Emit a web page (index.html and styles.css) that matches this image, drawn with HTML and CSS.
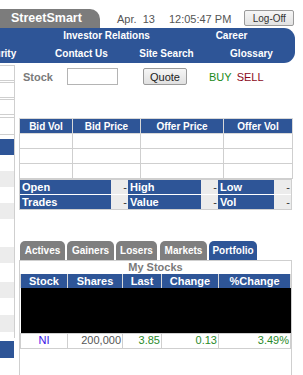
FILE: index.html
```html
<!DOCTYPE html>
<html>
<head>
<meta charset="utf-8">
<link rel="stylesheet" href="styles.css">
</head>
<body>
<div class="page">
  <header class="top">
    <div class="brand">StreetSmart</div>
    <span class="date">Apr.  13</span>
    <span class="time">12:05:47 PM</span>
    <button class="logoff">Log-Off</button>
  </header>
  <nav class="nav">
    <div class="nav-row nav-row1"><a>Investor Relations</a><a>Career</a></div>
    <div class="nav-row nav-row2"><a>Security</a><a>Contact Us</a><a>Site Search</a><a>Glossary</a></div>
  </nav>
  <div class="content">
    <aside class="side">
      <div class="side-inner">
        <div class="sbox b1"></div>
        <div class="sbox b2"></div>
        <div class="sbox b3"></div>
        <div class="sbox b4"></div>
        <div class="sblue"></div>
        <div class="srow h16"></div>
        <div class="srow alt h16"></div>
        <div class="srow h16"></div>
        <div class="srow alt h16"></div>
        <div class="srow h28"></div>
        <div class="srow alt h16"></div>
        <div class="srow h19"></div>
        <div class="srow alt h16"></div>
        <div class="srow h17"></div>
        <div class="srow alt h17"></div>
        <div class="srow h6"></div>
      </div>
      <div class="sblue last"></div>
    </aside>
    <main class="main">
      <div class="quote-row">
        <span class="stock-label">Stock</span>
        <input class="stock-input" type="text">
        <button class="quote-btn">Quote</button>
        <span class="buy">BUY</span>
        <span class="sell">SELL</span>
      </div>

      <table class="depth">
        <colgroup><col class="c1"><col class="c2"><col class="c3"><col class="c4"></colgroup>
        <tr class="head"><th>Bid Vol</th><th>Bid Price</th><th>Offer Price</th><th>Offer Vol</th></tr>
        <tr><td></td><td></td><td></td><td></td></tr>
        <tr><td></td><td></td><td></td><td></td></tr>
        <tr><td></td><td></td><td></td><td></td></tr>
      </table>

      <div class="stats">
        <div class="lab">Open</div><div class="val">-</div>
        <div class="lab">High</div><div class="val">-</div>
        <div class="lab">Low</div><div class="val">-</div>
        <div class="lab">Trades</div><div class="val">-</div>
        <div class="lab">Value</div><div class="val">-</div>
        <div class="lab">Vol</div><div class="val">-</div>
      </div>

      <div class="tabs">
        <div class="tab t1">Actives</div>
        <div class="tab t2">Gainers</div>
        <div class="tab t3">Losers</div>
        <div class="tab t4">Markets</div>
        <div class="tab t5 active">Portfolio</div>
      </div>
      <div class="portfolio">
        <div class="pf-title">My Stocks</div>
        <table class="pf">
          <colgroup><col class="p1"><col class="p2"><col class="p3"><col class="p4"><col class="p5"></colgroup>
          <tr class="head"><th>Stock</th><th>Shares</th><th>Last</th><th>Change</th><th>%Change</th></tr>
          <tr class="black"><td colspan="5"></td></tr>
          <tr class="data"><td class="sym">NI</td><td class="num gray">200,000</td><td class="num up">3.85</td><td class="num up">0.13</td><td class="num up">3.49%</td></tr>
        </table>
      </div>
    </main>
  </div>
</div>
</body>
</html>
```

FILE: styles.css
```css
* { box-sizing: border-box; }
html, body { margin: 0; padding: 0; background: #fff; }
body { width: 303px; height: 375px; overflow: hidden; font-family: "Liberation Sans", Arial, sans-serif; }

.page { width: 303px; }

.top { height: 28px; padding-top: 9px; display: flex; align-items: center; }
.brand { width: 100px; height: 19px; line-height: 19px; background: #7c7c7c; color: #fff; font-weight: bold; font-size: 12.5px; padding-left: 11px; border-top-right-radius: 10px; align-self: flex-start; }
.date { margin-left: 17px; white-space: pre; font-size: 11px; color: #555; }
.time { margin-left: 14px; font-size: 11px; color: #555; }
.logoff { margin-left: 13px; width: 50px; height: 16px; padding: 0; font-family: "Liberation Sans", Arial, sans-serif; font-size: 10px; color: #333; background: linear-gradient(#f6f6f6, #e2e2e2); border: 1px solid #9a9a9a; border-radius: 2px; align-self: flex-start; margin-top: 1px; }

.nav { width: 295px; height: 35px; background: #2e5597; border-radius: 0 11px 11px 0; overflow: hidden; color: #fff; font-weight: bold; font-size: 10px; }
.nav-row { display: grid; justify-items: center; white-space: nowrap; }
.nav-row1 { height: 17px; line-height: 16px; margin-left: 44px; grid-template-columns: 125px 125px; }
.nav-row2 { height: 18px; line-height: 18px; margin-left: -46px; grid-template-columns: repeat(4, 85px); }

.content { display: flex; }
.side { width: 15px; flex: none; }
.side-inner { width: 15px; border-right: 1px solid #cfcfcf; }
.sbox { height: 16px; border-top: 1px solid #cfcfcf; border-bottom: 1px solid #cfcfcf; }
.b1 { margin-top: 2px; }
.b2 { margin-top: 1px; }
.b3 { margin-top: 1px; }
.b4 { margin-top: 2px; height: 18px; }
.sblue { width: 14px; height: 16px; background: #2e5597; margin-top: 4px; }
.sblue.last { margin-top: 3px; height: 17px; }
.srow { width: 14px; background: #fff; }
.srow.alt { background: #ececec; }
.h6 { height: 6px; } .h16 { height: 16px; } .h17 { height: 17px; } .h19 { height: 19px; } .h28 { height: 28px; }

.main { padding-left: 4px; }
.quote-row { margin-top: 5px; height: 17px; display: flex; align-items: center; }
.stock-label { margin-left: 4px; width: 30px; font-weight: bold; font-size: 11px; color: #7a7a7a; }
.stock-input { margin-left: 14px; width: 51px; height: 17px; border: 1px solid #b4b4b4; padding: 0; }
.quote-btn { margin-left: 25px; width: 44px; height: 17px; padding: 0; font-family: "Liberation Sans", Arial, sans-serif; font-size: 11px; color: #222; background: linear-gradient(#f6f6f6, #e0e0e0); border: 1px solid #9a9a9a; border-radius: 2px; }
.buy { margin-left: 22px; font-size: 11px; color: #1a8a1a; }
.sell { margin-left: 5px; font-size: 11px; color: #8b0a1a; }

.depth { margin-top: 33px; width: 273px; border-collapse: collapse; table-layout: fixed; }
.c1 { width: 53px; } .c2 { width: 68px; } .c3 { width: 83px; } .c4 { width: 69px; }
.depth th, .depth td { border: 1px solid #cfcfcf; height: 15px; padding: 0; }
.depth th { background: #2e5597; color: #fff; font-size: 10px; font-weight: bold; line-height: 13px; border-color: #d8d8d8; }

.stats { margin-top: 0; width: 273px; border: 1px solid #cfcfcf; display: grid; grid-template-columns: 91px 17px 73px 17px 56px 17px; grid-auto-rows: 14px; row-gap: 1px; background: #fff; font-size: 11px; }
.lab { background: #2e5597; color: #fff; font-weight: bold; padding-left: 2px; line-height: 14px; }
.val { background: #ececec; color: #333; text-align: right; padding-right: 1px; line-height: 14px; }

.tabs { margin-top: 31px; padding-left: 1px; height: 19px; display: flex; }
.tab { height: 19px; line-height: 19px; background: #7f7f7f; color: #fff; font-weight: bold; font-size: 10px; text-align: center; border-radius: 5px 5px 0 0; }
.t1 { width: 45px; }
.t2 { width: 47px; margin-left: 2px; }
.t3 { width: 41px; margin-left: 2px; }
.t4 { width: 47px; margin-left: 3px; }
.t5 { width: 48px; margin-left: 2px; }
.tab.active { background: #2e5597; }

.portfolio { width: 273px; height: 130px; border: 1px solid #cfcfcf; }
.pf-title { height: 13px; line-height: 13px; text-align: center; font-weight: bold; font-size: 11px; color: #7a7a7a; }
.pf { width: 270px; border-collapse: collapse; table-layout: fixed; }
.p1 { width: 47px; } .p2 { width: 55px; } .p3 { width: 39px; } .p4 { width: 57px; } .p5 { width: 72px; }
.pf th { background: #2e5597; color: #fff; font-size: 11px; font-weight: bold; height: 14px; line-height: 13px; padding: 0; border: 1px solid #d8d8d8; border-top: 0; border-bottom: 0; }
.pf tr.black td { background: #000; height: 45px; padding: 0; border: 0; }
.pf tr.data td { height: 15px; font-size: 11px; padding: 0 1px; border: 1px solid #cfcfcf; line-height: 13px; }
.sym { text-align: center; color: #3a10e8; }
.num { text-align: right; }
.gray { color: #555; }
.up { color: #2a8a2a; }
```
